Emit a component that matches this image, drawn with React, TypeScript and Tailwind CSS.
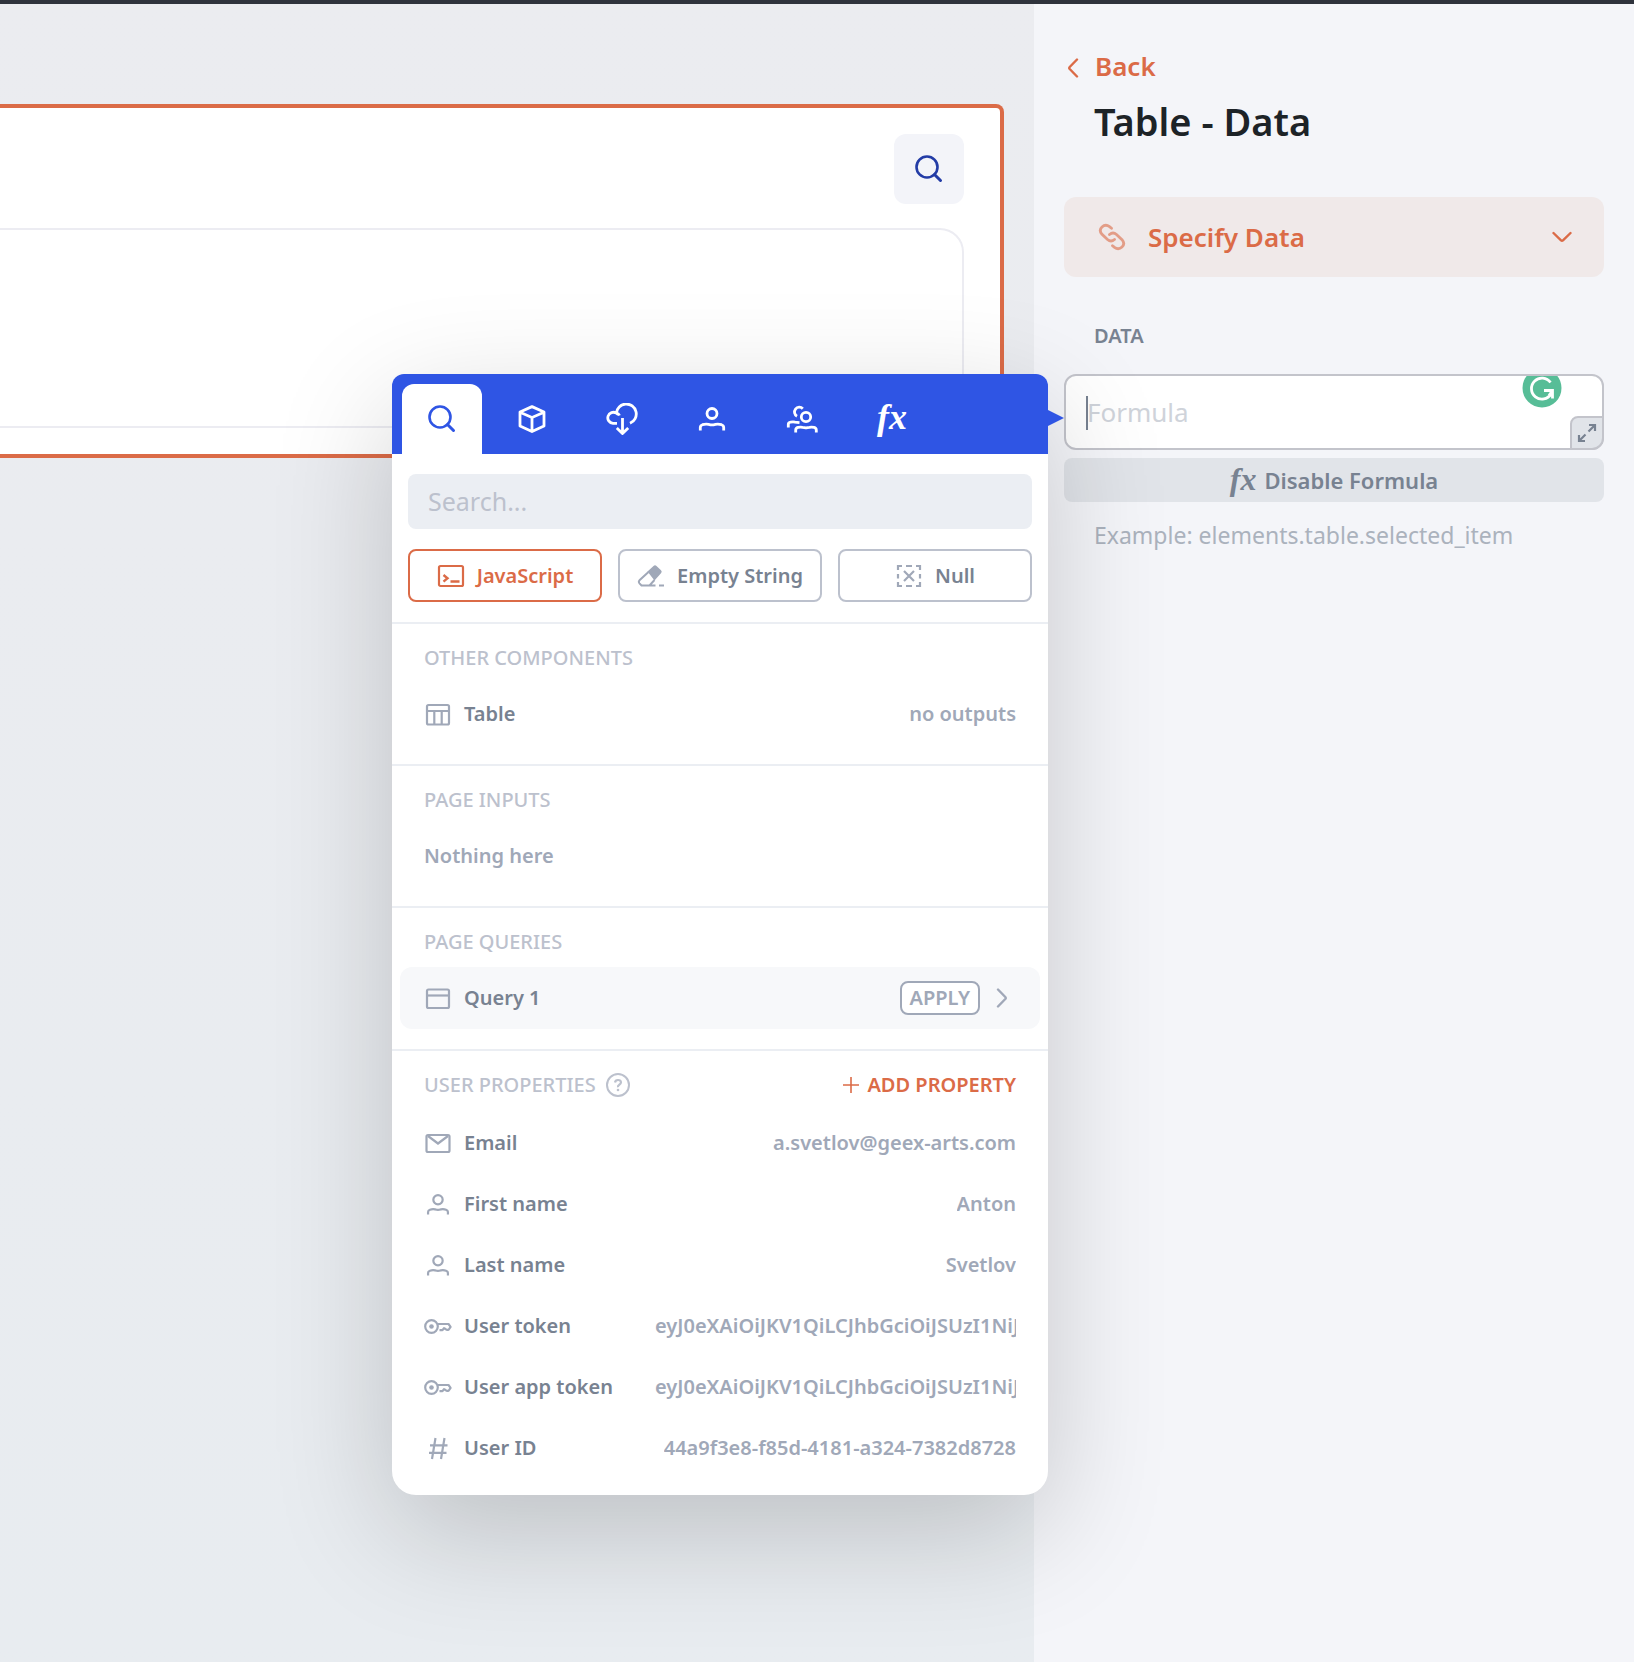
import React from "react";

type IconProps = { className?: string; children: React.ReactNode; box?: string };

function Svg({ className = "", children, box = "0 0 28 28" }: IconProps) {
  return (
    <svg
      viewBox={box}
      className={`shrink-0 ${className}`}
      fill="none"
      stroke="currentColor"
      strokeWidth="2.2"
      aria-hidden="true"
    >
      {children}
    </svg>
  );
}

const SearchIcon = ({ className = "size-7" }: { className?: string }) => (
  <Svg className={className}>
    <circle cx="12" cy="12" r="10.5" strokeWidth="2.6" />
    <path d="M19.5 19.5 25.5 25.5" strokeWidth="3" strokeLinecap="round" />
  </Svg>
);

const BoxIcon = () => (
  <Svg className="size-7">
    <path
      d="M14 1.6 26 7v14L14 26.600 2 21V7zM2 7.300l12 5.200 12-5.200M14 12.500v14"
      strokeWidth="2.800"
      strokeLinejoin="round"
    />
  </Svg>
);

const CloudIcon = () => (
  <Svg className="size-8" box="0 0 32 32">
    <path
      d="M11 20.300H7A5.500 5.500 0 1 1 10.300 10.200A10 10 0 1 1 24 20.300M10.300 10.200Q12.500 10.300 13.500 12.500"
      strokeWidth="2.800"
    />
    <path d="M16.500 15v15M10.800 25l5.700 5.500 5.700-5.500" strokeWidth="2.800" />
  </Svg>
);

const userBody =
  "M2.300 25.500V22.500Q2.300 20.500 4.500 19.700Q7.500 18.700 10.500 19.300L12.500 19.800Q14 20.100 15.500 19.800L17.500 19.300Q20.500 18.700 23.500 19.700Q25.700 20.500 25.700 22.500V25.500";

const UserIcon = () => (
  <Svg className="size-7">
    <circle cx="14" cy="8.500" r="5" strokeWidth="2.800" />
    <path d={userBody} strokeWidth="2.800" />
  </Svg>
);

const PersonIcon = () => (
  <Svg className="size-7" box="-2.500 -3.500 33 33">
    <circle cx="14" cy="8" r="5.500" strokeWidth="2.600" />
    <path d={userBody} strokeWidth="2.600" />
  </Svg>
);

const UsersIcon = () => (
  <Svg className="h-7 w-8" box="0 0 32 28">
    <circle cx="20" cy="12" r="4.700" strokeWidth="2.800" />
    <path
      d="M9.700 27.500V25Q9.700 23 12 22.400Q14.500 21.800 16.500 22.300L18.500 22.700Q20 23 21.500 22.700L23.500 22.300Q25.500 21.800 28 22.400Q30.300 23 30.300 25V27.500"
      strokeWidth="2.800"
    />
    <path
      d="M16.800 3.700A4.800 4.800 0 1 0 11 11.200M2.300 22.500V19.500Q2.300 17.500 4.500 17.200Q7 16.600 9 17.100Q11 17.500 13.500 17.700"
      strokeWidth="2.800"
    />
  </Svg>
);

const TerminalIcon = () => (
  <Svg className="size-7">
    <rect x="2" y="4" width="24" height="20" rx="1.500" />
    <path d="M6.500 13l4 3.300-4 3.300M13.500 19.500h9" strokeWidth="2.400" />
  </Svg>
);

const EraserIcon = () => (
  <Svg className="size-7">
    <path
      d="M10.500 9.500 16.500 4q1.500-1.300 3 0l4.500 4.300q1.500 1.500 0 3L17.500 18.500z"
      fill="currentColor"
      stroke="none"
    />
    <path
      d="M11.500 10 2.500 18.300q-1.300 1.500 0 3L4.500 23.500H12.500L17.500 18M4.500 23.500H18.500M22 23.500h5"
      strokeWidth="2"
    />
  </Svg>
);

const NullIcon = () => (
  <Svg className="size-7">
    <path
      d="M3 8V4h4M11 4h6M21 4h4v4M25 12v4.500M25 20v4h-4M17 24h-6M7 24H3v-4M3 16.500V12"
      strokeWidth="2.200"
    />
    <path d="M9 9l10 10M19 9L9 19" />
  </Svg>
);

const TableIcon = () => (
  <Svg className="size-7">
    <rect x="3" y="5" width="22" height="19.500" rx="1.500" />
    <path d="M3 11h22M10.300 11v13.500M17.700 11v13.500" />
  </Svg>
);

const WindowIcon = () => (
  <Svg className="size-7">
    <rect x="3" y="5.500" width="22" height="18.500" rx="1.500" />
    <path d="M3 11.500h22" />
  </Svg>
);

const MailIcon = () => (
  <Svg className="size-7">
    <rect x="2.500" y="6" width="23" height="17" rx="1.500" />
    <path d="M4 7 14 14.500 24 7" />
  </Svg>
);

const KeyIcon = () => (
  <Svg className="size-7">
    <circle cx="7.500" cy="14.500" r="6.300" />
    <circle cx="7.500" cy="14.500" r="2.300" fill="currentColor" stroke="none" />
    <path
      d="M13.500 12H24.500L26.600 14.800 24.800 17.500Q23 18.500 21.500 17L20 16.100 18.500 18.100H15.500"
      strokeLinejoin="round"
    />
  </Svg>
);

const HashIcon = () => (
  <Svg className="size-7">
    <path d="M11.500 4 8 25M20.500 4 17 25M6 11.300h17.500M5 18.800h17.500" />
  </Svg>
);

const HelpIcon = () => (
  <Svg className="size-6" box="0 0 24 24">
    <circle cx="12" cy="12" r="11" strokeWidth="2" />
    <path d="M9 9.500Q9.300 7 12 7t3 2.300Q15 10.700 13.300 11.700T12 14.200" />
    <circle cx="12" cy="17" r="1.300" fill="currentColor" stroke="none" />
  </Svg>
);

const Chevron = ({ className = "" }: { className?: string }) => (
  <Svg className={`h-5 w-3 ${className}`} box="0 0 12 20">
    <path d="M2 1.500 9.300 9q.9 1 0 2L2 18.500" strokeWidth="2.400" strokeLinecap="round" />
  </Svg>
);

const LinkIcon = () => (
  <Svg className="size-7">
    <path
      d="M13.500 5.300 11.500 3.600Q7.500.800 4 4T4 11.300L9.500 16.500Q13 19.500 16.500 16.500M14.500 22.700 16.500 24.400Q20.500 27.200 24 24T24 16.700L18.500 11.500Q15 8.500 11.500 11.500"
      strokeWidth="2.800"
      strokeLinecap="round"
    />
  </Svg>
);

const Fx = ({ className = "" }: { className?: string }) => (
  <span className={`font-['Liberation_Serif',serif] font-bold italic ${className}`} aria-hidden="true">
    fx
  </span>
);

const tabs = [
  { name: "Components", icon: <BoxIcon /> },
  { name: "Requests", icon: <CloudIcon /> },
  { name: "User", icon: <UserIcon /> },
  { name: "Team", icon: <UsersIcon /> },
  { name: "Functions", icon: <Fx className="pb-1 text-[36px] leading-8" /> },
];

const TOKEN = "eyJ0eXAiOiJKV1QiLCJhbGciOiJSUzI1NiJ9";

const properties = [
  { name: "Email", value: "a.svetlov@geex-arts.com", icon: <MailIcon /> },
  { name: "First name", value: "Anton", icon: <PersonIcon /> },
  { name: "Last name", value: "Svetlov", icon: <PersonIcon /> },
  { name: "User token", value: TOKEN, icon: <KeyIcon /> },
  { name: "User app token", value: TOKEN, icon: <KeyIcon /> },
  { name: "User ID", value: "44a9f3e8-f85d-4181-a324-7382d8728", icon: <HashIcon /> },
];

function Heading({ children }: { children: React.ReactNode }) {
  return <h2 className="text-[20px] leading-7 font-medium text-[#bcc1cd]">{children}</h2>;
}

function Row({ icon, name, children }: { icon: React.ReactNode; name: string; children?: React.ReactNode }) {
  return (
    <div className="flex h-[61px] items-center gap-3 px-6 text-[#a0a8b8]">
      {icon}
      <span className="shrink-0 text-[#788291]">{name}</span>
      {children}
    </div>
  );
}

function Section({ title, children }: { title: string; children: React.ReactNode }) {
  return (
    <section className="border-t-2 border-[#ebeef3] px-2 pt-5 pb-5">
      <div className="mb-[11px] px-6">
        <Heading>{title}</Heading>
      </div>
      {children}
    </section>
  );
}

function FormulaPopover() {
  return (
    <div className="absolute -top-[2px] right-full z-10 mr-[18px] w-[656px] rounded-t-xl rounded-b-3xl bg-white pb-[17px] text-[20px] leading-7 font-semibold shadow-[0_36px_120px_rgba(0,0,0,0.19)]">
      <div className="flex h-20 gap-[10px] rounded-t-xl bg-[#2f55e4] px-[10px] pt-[10px] text-white">
        <button aria-label="Search" className="flex w-20 items-center justify-center rounded-t-xl bg-white text-[#2f55e4]">
          <SearchIcon />
        </button>
        {tabs.map((tab) => (
          <button key={tab.name} aria-label={tab.name} className="flex w-20 items-center justify-center">
            {tab.icon}
          </button>
        ))}
      </div>
      <span className="absolute top-9 left-full border-y-8 border-l-[16px] border-y-transparent border-l-[#2f55e4]" />

      <div className="space-y-5 p-4 pt-5 pb-5">
        <input
          aria-label="Search"
          placeholder="Search..."
          className="block h-[55px] w-full rounded-lg bg-[#ebeef3] px-5 pb-[2px] text-[25px] font-normal outline-none placeholder:text-[#bcc1cd]"
        />
        <div className="flex gap-4 text-[#788291]">
          <button className="flex h-[53px] flex-1 items-center justify-center gap-3 rounded-lg border-2 border-[#db6b47] text-[#db6b47]">
            <TerminalIcon />
            JavaScript
          </button>
          <button className="flex h-[53px] w-[204px] items-center justify-center gap-3 rounded-lg border-2 border-[#bcc1cd] whitespace-nowrap">
            <span className="text-[#a0a8b8]">
              <EraserIcon />
            </span>
            Empty String
          </button>
          <button className="flex h-[53px] flex-1 items-center justify-center gap-3 rounded-lg border-2 border-[#bcc1cd]">
            <span className="text-[#a0a8b8]">
              <NullIcon />
            </span>
            Null
          </button>
        </div>
      </div>

      <Section title="OTHER COMPONENTS">
        <Row icon={<TableIcon />} name="Table">
          <span className="ml-auto">no outputs</span>
        </Row>
      </Section>

      <Section title="PAGE INPUTS">
        <p className="flex h-[61px] items-center px-6 text-[#a0a8b8]">Nothing here</p>
      </Section>

      <Section title="PAGE QUERIES">
        <div className="rounded-xl bg-[#f7f8fa] pb-px">
          <Row icon={<WindowIcon />} name="Query 1">
            <button className="ml-auto flex h-[34px] items-center rounded-lg border-2 border-[#a0a8b8] bg-white px-2">
              APPLY
            </button>
            <Chevron className="mr-2 ml-1" />
          </Row>
        </div>
      </Section>

      <section className="border-t-2 border-[#ebeef3] px-2 pt-5">
        <div className="mb-[13px] flex items-center gap-[10px] px-6">
          <Heading>USER PROPERTIES</Heading>
          <span className="text-[#bcc1cd]">
            <HelpIcon />
          </span>
          <button className="ml-auto flex items-center gap-2 text-[#db6b47]">
            <Svg className="size-4" box="0 0 16 16">
              <path d="M8 0v16M0 8h16" strokeWidth="1.600" />
            </Svg>
            ADD PROPERTY
          </button>
        </div>
        {properties.map((p) => (
          <Row key={p.name} icon={p.icon} name={p.name}>
            <span className="ml-auto max-w-[361px] overflow-hidden whitespace-nowrap">{p.value}</span>
          </Row>
        ))}
      </section>
    </div>
  );
}

function Settings() {
  return (
    <aside className="w-[600px] shrink-0 bg-[#f4f5f9] px-[30px] pt-11 font-semibold text-[#788291]">
      <a href="#back" className="flex items-center gap-4 pl-[3px] text-[26px] leading-9 text-[#db6b47]">
        <Chevron className="mt-1 rotate-180" />
        Back
      </a>
      <h1 className="mt-[11px] ml-[30px] text-[38px] leading-[52px] text-[#1d2327]">Table - Data</h1>
      <button className="mt-[50px] flex h-20 w-full items-center rounded-xl bg-[#f0e9e9] px-[34px] text-[26px] leading-9 text-[#db6b47]">
        <span className="opacity-60">
          <LinkIcon />
        </span>
        <span className="ml-[22px]">Specify Data</span>
        <Chevron className="mr-[2px] ml-auto rotate-90" />
      </button>
      <label htmlFor="formula" className="mt-[45px] ml-[30px] block text-[20px] leading-7">
        DATA
      </label>
      <div className="relative mt-6 h-[76px] rounded-xl border-2 border-[#c3c4cb] bg-white">
        <input
          id="formula"
          placeholder="Formula"
          className="size-full rounded-xl bg-transparent px-[21px] text-[26px] font-normal outline-none placeholder:text-[#cfd3da]"
        />
        <span className="absolute top-5 left-5 h-[34px] w-[2px] bg-[#788291]" />
        <span className="absolute top-0 right-[40px] h-[32px] w-10 overflow-hidden">
          <svg viewBox="0 0 40 40" className="absolute bottom-0 size-10">
            <circle cx="20" cy="20" r="19.500" fill="#57bd97" />
            <path
              d="M28.500 14.500A10.500 10.500 0 1 0 29 26M22 22.500h8.500v8M30.500 22.500 27 27.500"
              fill="none"
              stroke="white"
              strokeWidth="2.800"
            />
          </svg>
        </span>
        <button
          aria-label="Expand"
          className="absolute -right-[2px] -bottom-[2px] flex size-[34px] items-center justify-center rounded-tl-lg rounded-br-xl border-2 border-[#c3c4cb] bg-[#e1e4e9]"
        >
          <Svg className="size-5" box="0 0 20 20">
            <path d="M12 2h6v6M18 2l-6.500 6.500M8 18H2v-6M2 18l6.500-6.500" />
          </Svg>
        </button>
        <FormulaPopover />
      </div>
      <button className="mt-2 flex h-11 w-full items-center justify-center gap-2 rounded-lg bg-[#e1e4e9] text-[22px] leading-8">
        <Fx className="pb-[2px] text-[32px]" />
        Disable Formula
      </button>
      <p className="mt-[17px] ml-[30px] text-[23px] leading-8 font-normal text-[#abb2bd]">
        Example: elements.table.selected_item
      </p>
    </aside>
  );
}

export default function App() {
  return (
    <div className="flex min-h-screen flex-col overflow-hidden font-['Noto_Sans',sans-serif]">
      <header className="h-1 bg-[#2f333c]" />
      <div className="flex flex-1">
        <main className="flex-1 bg-linear-to-b from-[#ebecf0] to-[#e8ecf0] pt-[100px] pr-[30px]">
          <div className="rounded-r-lg border-4 border-l-0 border-[#db6b47] bg-white pt-[26px] pr-9 pb-[26px]">
            <button
              aria-label="Search table"
              className="ml-auto flex size-[70px] items-center justify-center rounded-xl bg-[#f3f4f9] text-[#233ca6]"
            >
              <SearchIcon />
            </button>
            <div className="mt-6 h-[200px] rounded-tr-3xl border-y-2 border-r-2 border-[#ececf2]" />
          </div>
        </main>
        <Settings />
      </div>
    </div>
  );
}
